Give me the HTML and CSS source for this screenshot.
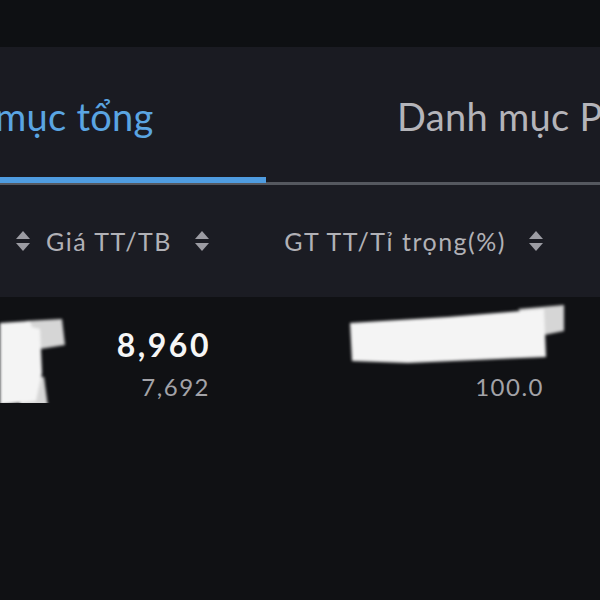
FILE: index.html
```html
<!DOCTYPE html>
<html lang="vi">
	<head>
		<meta charset="UTF-8">
		<title>Danh mục</title>
		<link rel="stylesheet" href="styles.css">
	</head>
	<body>
		<section class="topBar"></section>

		<section class="tabBar"> <!-- Tabs -->
			<div class="tabStrip">
				<div class="tab tabActive">Danh mục tổng</div>
				<div class="tab">Danh mục Phái sinh</div>
			</div>
		</section>

		<section class="tableHead"> <!-- Column headers -->
			<div class="headCell">
				<svg class="sortIcon" viewBox="0 0 18 24"><path d="M2 10 L9 2 L16 10 Z"/><path d="M2 14 L16 14 L9 22 Z"/></svg>
			</div>
			<div class="headCell">
				<span>Giá TT/TB</span>
				<svg class="sortIcon" viewBox="0 0 18 24"><path d="M2 10 L9 2 L16 10 Z"/><path d="M2 14 L16 14 L9 22 Z"/></svg>
			</div>
			<div class="headCell">
				<span>GT TT/Tỉ trọng(%)</span>
				<svg class="sortIcon" viewBox="0 0 18 24"><path d="M2 10 L9 2 L16 10 Z"/><path d="M2 14 L16 14 L9 22 Z"/></svg>
			</div>
		</section>

		<section class="tableRow"> <!-- Holding row -->
			<div class="cell">
				<svg class="scribble scribbleLeft" viewBox="0 0 70 100">
					<path class="scribbleSoft" d="M26 6 L62 4 L65 30 L40 34 L40 60 L30 60 Z"/>
					<path class="scribbleSoft" d="M20 60 L44 62 L48 92 L20 92 Z"/>
					<path d="M0 8 L30 6 L32 12 L40 14 L42 58 L36 86 L0 90 Z"/>
				</svg>
			</div>
			<div class="cell">
				<div class="valueMain">8,960</div>
				<div class="valueSub">7,692</div>
			</div>
			<div class="cell">
				<div class="valueMain">&nbsp;</div>
				<div class="valueSub">100.0</div>
				<svg class="scribble scribbleRight" viewBox="0 0 220 64">
					<path class="scribbleSoft" d="M170 6 L216 2 L216 28 L196 32 Z"/>
					<path d="M2 20 L100 14 L196 6 L198 54 L60 60 L4 58 Z"/>
				</svg>
			</div>
		</section>
	</body>
</html>
```

FILE: styles.css
```css
html
{
	margin: 0;
	padding: 0;
	background: #101114;
}

body
{
	margin: 0;
	padding: 0;
	background: #101114;
	font-family: Lato, "Noto Sans", sans-serif;
	overflow: hidden;
}

.topBar
{
	height: 47px;
	background: #0e1013;
}

.tabBar
{
	background: #1a1b22;
	padding-top: 46px;
	overflow: hidden;
}

.tabStrip
{
	display: flex;
	align-items: flex-end;
	border-bottom: 3px solid #55585f;
	height: 89px;
}

.tab
{
	flex: none;
	font-size: 38px;
	letter-spacing: 0.3px;
	color: #b4b4b9;
	white-space: nowrap;
	height: 89px;
	box-sizing: border-box;
}

.tabActive
{
	color: #5aa5e2;
	width: 372px;
	margin-left: -106px;
	margin-bottom: -1px;
	height: 90px;
	border-bottom: 6px solid #4f9ce0;
}

.tab + .tab
{
	padding-left: 131px;
}

.tableHead
{
	display: grid;
	grid-template-columns: 32px 179px 334px 1fr;
	height: 112px;
	background: #1b1c23;
	align-items: center;
}

.headCell
{
	display: flex;
	justify-content: flex-end;
	align-items: center;
	gap: 21px;
	font-size: 25px;
	letter-spacing: 1.5px;
	color: #b1b1b6;
}

.sortIcon
{
	width: 18px;
	height: 24px;
	fill: #9c9ca3;
}

.tableRow
{
	display: grid;
	grid-template-columns: 60px 151px 334px 1fr;
	padding-top: 28px;
}

.cell
{
	position: relative;
	text-align: right;
	padding-right: 2px;
}

.valueMain
{
	font-size: 32px;
	font-weight: bold;
	letter-spacing: 2.5px;
	margin-right: -2px;
	color: #f6f6f6;
	line-height: 40px;
}

.valueSub
{
	font-size: 24px;
	letter-spacing: 1.5px;
	margin-right: -1px;
	color: #a3a3a8;
	line-height: 32px;
	margin-top: 6px;
}

.scribble
{
	position: absolute;
	fill: #f4f4f4;
	filter: blur(1.5px);
}

.scribbleSoft
{
	fill: #d6d6d6;
}

.scribbleLeft
{
	left: 0;
	top: -10px;
	width: 70px;
	height: 100px;
}

.scribbleRight
{
	left: 137px;
	top: -22px;
	width: 220px;
	height: 64px;
}
```
